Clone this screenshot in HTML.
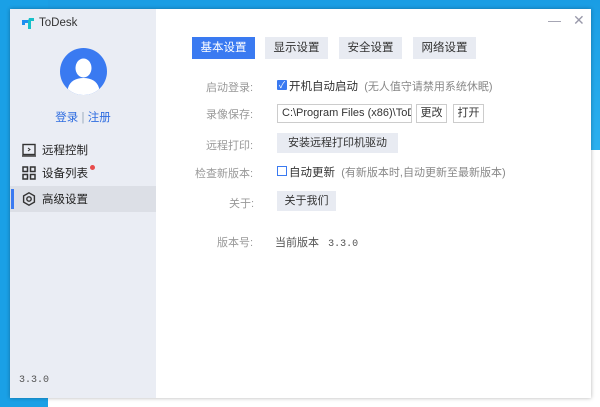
<!DOCTYPE html>
<html><head><meta charset="utf-8"><style>
*{margin:0;padding:0;box-sizing:border-box}
body{width:600px;height:407px;overflow:hidden;position:relative;background:#f3f4f6;font-family:"Liberation Sans","Noto Sans CJK SC",sans-serif;font-size:11px;color:#333}
.bgL{position:absolute;left:0;top:0;width:48px;height:407px;background:#1aa0e6}
.bgT{position:absolute;left:0;top:0;width:600px;height:150px;background:linear-gradient(180deg,#1a9de4,#2bb0ef)}
.bgR{position:absolute;left:580px;top:150px;width:20px;height:257px;background:#fff}
.bgB{position:absolute;left:48px;top:395px;width:552px;height:12px;background:#fff}
.win{position:absolute;left:10px;top:9px;width:581px;height:389px;background:#fff;box-shadow:0 0 4px rgba(0,0,0,.3)}
.side{position:absolute;left:0;top:0;width:146px;height:389px;background:#eaedf4}
.logo{position:absolute;left:12px;top:8px;font-size:11.5px;color:#333;display:flex;align-items:center;gap:5px}
.av{position:absolute;left:50px;top:39px;width:47px;height:47px;border-radius:50%;background:#3a7af1;overflow:hidden}
.login{position:absolute;left:0;width:146px;top:100px;text-align:center;color:#2f6de0;font-size:11.5px}
.nav{position:absolute;left:0;width:146px;height:26px;display:flex;align-items:center;padding-left:32px;font-size:11.5px;color:#222}
.nav svg{position:absolute;left:12px;top:6px}
.ver{position:absolute;left:9px;top:366px;font-family:"Liberation Mono",monospace;font-size:10px;color:#555}
.tab{position:absolute;top:28px;height:22px;line-height:22px;text-align:center;width:63px;background:#e8ebf2;color:#333;font-size:11.5px}
.abs{position:absolute;font-size:11.5px}
.btn{position:absolute;background:#e8ebf2;height:20px;line-height:20px;text-align:center;font-size:11px}
.bx{position:absolute;border:1px solid #ccc;height:19px;line-height:17px;background:#fff;font-size:11px;padding-left:4px;overflow:hidden;white-space:nowrap}
.gl{position:absolute;color:#999;font-size:11px}
</style></head><body>
<div class="bgT"></div><div class="bgL"></div><div class="bgR"></div><div class="bgB"></div>
<div class="win">
 <div class="side">
  <div class="logo"><svg width="12" height="11" viewBox="0 0 12 11"><path d="M0 2h7v3H3v2H0z" fill="#1e8ff0"/><path d="M7 0h5v3H9v8H6V3z" fill="#17c0c9"/></svg>ToDesk</div>
  <div class="av"><svg width="47" height="47" viewBox="0 0 47 47"><ellipse cx="23.5" cy="20" rx="8" ry="9.5" fill="#fff"/><path d="M8 40c2-7 8-10 15.5-10S37 33 39 40v8H8z" fill="#fff"/></svg></div>
  <div class="login">登录 <span style="color:#9ab">|</span> 注册</div>
  <div class="nav" style="top:128px"><svg width="14" height="14" viewBox="0 0 14 14"><rect x="1" y="1.5" width="12" height="10" fill="none" stroke="#333" stroke-width="1.4"/><path d="M0 13h14" stroke="#333" stroke-width="1.4"/><path d="M6 5l2 1.5-2 1.5" fill="none" stroke="#333"/></svg>远程控制</div>
  <div class="nav" style="top:151px"><svg width="14" height="14" viewBox="0 0 14 14" fill="none" stroke="#333" stroke-width="1.5"><rect x="1" y="1" width="4.5" height="4.5"/><rect x="8.5" y="1" width="4.5" height="4.5"/><rect x="1" y="8.5" width="4.5" height="4.5"/><rect x="8.5" y="8.5" width="4.5" height="4.5"/></svg>设备列表<span style="position:absolute;left:80px;top:5px;width:5px;height:5px;border-radius:50%;background:#e84b4b"></span></div>
  <div class="nav" style="top:177px;background:#dcdfe6"><span style="position:absolute;left:1px;top:3px;width:3px;height:20px;background:#3a7af1"></span><svg width="14" height="14" viewBox="0 0 14 14" fill="none" stroke="#333" stroke-width="1.4"><path d="M7 .8l5.4 3.1v6.2L7 13.2 1.6 10.1V3.9z"/><circle cx="7" cy="7" r="2.2"/></svg>高级设置</div>
  <div class="ver">3.3.0</div>
 </div>
 <div class="abs" style="left:538px;top:4px;color:#99a;font-size:13px">—</div>
 <div class="abs" style="left:563px;top:3px;color:#99a;font-size:14px">✕</div>
 <div class="tab" style="left:182px;background:#3a7af1;color:#fff">基本设置</div>
 <div class="tab" style="left:255px">显示设置</div>
 <div class="tab" style="left:329px">安全设置</div>
 <div class="tab" style="left:403px">网络设置</div>
 <div class="gl" style="left:196px;top:70px">启动登录:</div>
 <div class="abs" style="left:267px;top:71px;width:10px;height:10px;background:#3a7af1;border-radius:1px;color:#fff;font-size:9px;line-height:10px;text-align:center">✓</div>
 <div class="abs" style="left:279px;top:69px">开机自动启动 <span style="color:#888;font-size:11px">&nbsp;(无人值守请禁用系统休眠)</span></div>
 <div class="gl" style="left:196px;top:97px">录像保存:</div>
 <div class="bx" style="left:267px;top:95px;width:135px">C:\Program Files (x86)\ToDesk</div>
 <div class="bx" style="left:406px;top:95px;width:31px;padding:0;text-align:center">更改</div>
 <div class="bx" style="left:443px;top:95px;width:31px;padding:0;text-align:center">打开</div>
 <div class="gl" style="left:196px;top:128px">远程打印:</div>
 <div class="btn" style="left:267px;top:124px;width:121px">安装远程打印机驱动</div>
 <div class="gl" style="left:185px;top:156px">检查新版本:</div>
 <div class="abs" style="left:267px;top:157px;width:10px;height:10px;border:1px solid #3a7af1"></div>
 <div class="abs" style="left:279px;top:155px">自动更新 <span style="color:#888;font-size:11px">&nbsp;(有新版本时,自动更新至最新版本)</span></div>
 <div class="gl" style="left:219px;top:186px">关于:</div>
 <div class="btn" style="left:267px;top:182px;width:59px">关于我们</div>
 <div class="gl" style="left:207px;top:225px">版本号:</div>
 <div class="abs" style="left:265px;top:225px;font-size:11px;color:#555">当前版本 <span style="font-family:'Liberation Mono',monospace;font-size:10px">&nbsp;3.3.0</span></div>
</div>
</body></html>
